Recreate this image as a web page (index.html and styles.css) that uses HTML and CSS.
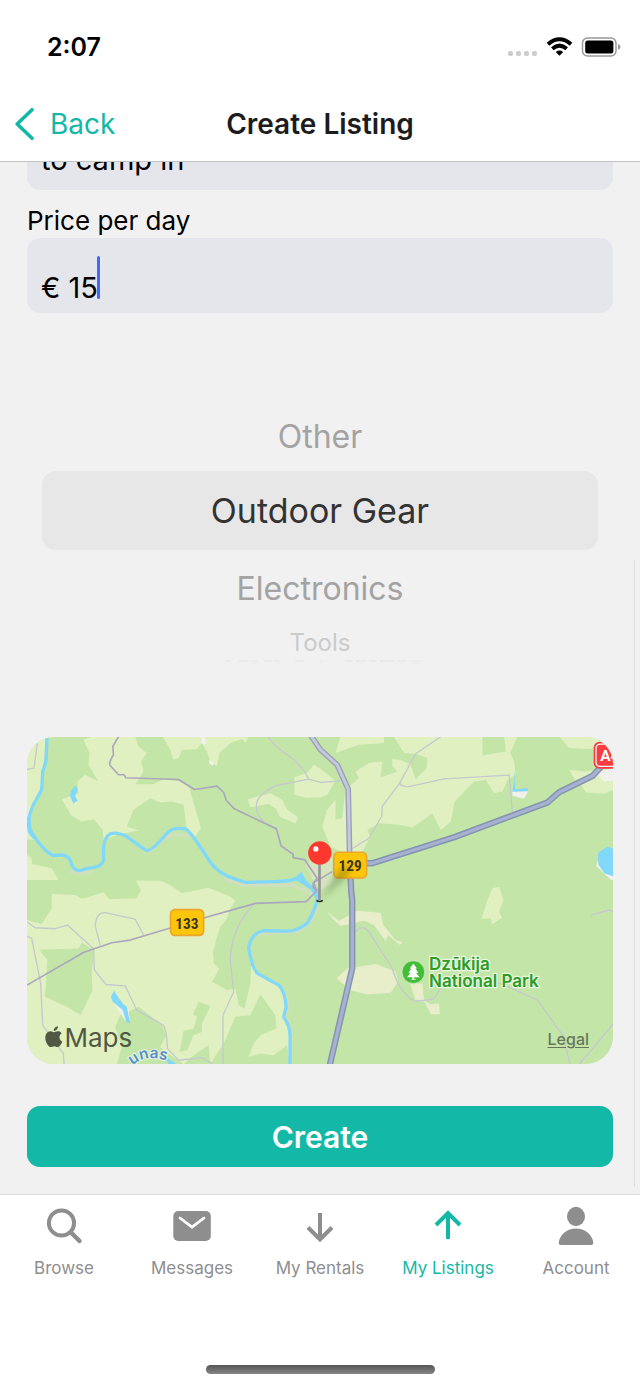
FILE: index.html
```html
<!DOCTYPE html>
<html lang="en">
<head>
<meta charset="utf-8">
<meta name="viewport" content="width=device-width, initial-scale=1">
<title>Create Listing</title>
<link rel="stylesheet" href="styles.css">
</head>
<body>
<div class="screen">
  <div class="status">
    <span class="time">2:07</span>
    <svg class="status-icons" viewBox="0 0 114 22" aria-hidden="true">
      <g fill="#ccc"><rect x="0" y="15" width="5" height="5" rx="2"/><rect x="8" y="15" width="5" height="5" rx="2"/><rect x="16" y="15" width="5" height="5" rx="2"/><rect x="24" y="15" width="5" height="5" rx="2"/></g>
      <g transform="translate(0 1)">
      <g fill="none" stroke="#000" stroke-width="4"><path d="M40 7.200Q51.500-2.600 63 7.200"/><path d="M44.300 11.700Q51.500 5.600 58.700 11.700"/></g>
      <path d="M47.800 14.900Q51.500 12 55.200 14.900L51.500 18.700Z"/>
      <rect x="74.500" y="1" width="33.500" height="18" rx="5" fill="none" stroke="#999" stroke-width="1.500"/>
      <rect x="77.200" y="3.600" width="28.200" height="12.800" rx="2.500"/>
      <path d="M110 7q2.500 1 2.500 3t-2.500 3z" fill="#999"/>
      </g>
    </svg>
  </div>
  <header class="header">
    <button class="back" type="button">
      <svg viewBox="0 0 20 32" aria-hidden="true"><path d="M17 1.800 2.200 16 17 30.200" fill="none" stroke="currentColor" stroke-width="3.600" stroke-linecap="round" stroke-linejoin="round"/></svg>
      Back
    </button>
    <h1 class="title">Create Listing</h1>
  </header>

  <main class="content">
    <form class="form">
      <textarea class="field description" aria-label="Description" rows="1">to camp in</textarea>
      <label class="label" for="price">Price per day</label>
      <div class="price">
        <input class="field price-input" id="price" type="text" value="€ 15">
        <span class="caret"></span>
      </div>
      <fieldset class="picker" aria-label="Category">
        <label class="option near above"><input type="radio" name="category">Other</label>
        <label class="option selected"><input type="radio" name="category" checked>Outdoor Gear</label>
        <label class="option near"><input type="radio" name="category">Electronics</label>
        <label class="option far"><input type="radio" name="category">Tools</label>
        <svg class="edge" viewBox="0 0 200 4" aria-hidden="true"><path d="M6 3h4m8 0h10m4 0h6m6 0h8m2 0h6m15 0h9m16 0h3m22 0h8m3 0h10m3 0h8m3 0h14m4 0h8m6 0h8m6 0h5" stroke="#e4e4e4" stroke-width="1"/></svg>
      </fieldset>

      <div class="map">
        <svg class="map-art" viewBox="21 21 1755 981" preserveAspectRatio="xMidYMid slice" role="img" aria-label="Map of Dzūkija National Park">
          <defs>
            <path id="river-name" d="M337 1006Q385 962 470 1004"/>
            <filter id="soft" x="-50%" y="-50%" width="200%" height="200%"><feGaussianBlur stdDeviation="10"/></filter>
          </defs>
          <rect x="21" y="21" width="1755" height="981" fill="#c3e6a8"/>
          <g fill="#e1f0c0">
            <path d="M21 21H77L70 110 60 180 35 250 28 300 48 330 21 328Z"/>
            <path d="M190 30 215 21H345L355 50 380 70 362 95 370 120 360 145 345 163H400L430 148 480 155 507 172 520 220 542 295 525 320 498 290 490 225 455 215 420 218 390 205 340 240 320 290 355 302 300 312 250 330 248 300 222 268 185 275 155 258 125 208 175 190 172 155 195 135 235 155 205 105 208 70Z"/>
            <path d="M428 21 450 60 460 90 475 85 485 60 530 58 545 40 560 65 570 95 590 108 597 70 630 40 665 28 675 38 685 21Z"/>
            <path d="M822 142 860 130 880 105 900 118 945 153 920 195 900 203 858 204 822 195Z"/>
            <path d="M682 208 750 190 785 210 800 240 832 262 825 280 780 262 765 235 745 222 690 232Z"/>
            <path d="M21 375 35 385V402L95 415 115 450H21Z"/>
            <path d="M95 492 165 495 185 507 250 487 268 508 350 505 362 480 347 452 420 452 445 462 485 490 565 473 630 500 645 512 625 545 620 565 600 590 590 620 578 665 580 700 597 715 575 755 620 780 645 775 655 825 672 835 690 760 693 690 715 730 780 770 795 820 790 860 808 900V1002H21V570L65 582 95 535Z"/>
            <g transform="translate(900)">
              <path d="M60 21 45 70 115 45 190 40V21Z"/>
              <path d="M220 21 250 70 285 72 320 85 318 115 285 148 270 105 240 90 215 88V110L230 125 180 143 185 95 145 100 105 125 115 145 75 180 65 265 45 270V210L20 240 5 290 30 350 60 365 95 370 125 365 150 320 140 300 175 280 235 285 275 293 335 250 360 300 390 275 402 215 460 155 495 150 520 190 545 185 560 150 585 135 580 95 568 70 590 21Z"/>
              <path d="M715 21 745 55 800 58 878 50 840 21ZM745 120 790 125 878 115V180L850 192 795 188 780 165 785 150 762 150Z"/>
              <path d="M500 510 515 475 535 470 548 510 535 545 543 563 515 583 510 565 482 567Z"/>
              <path d="M20 545 55 572 110 542 180 548 188 585 225 630 245 637 237 645 203 615 195 633 160 585 130 572 60 588 40 570ZM48 745 80 715 165 702 225 725 232 755 210 788 140 793 90 780ZM268 760H305L310 810 330 822 355 820 357 852H330L312 815 285 810Z" fill="#e8eeca"/>
            </g>
          </g>
          <g fill="#c3e6a8">
            <path d="M1385 21H1450L1455 65 1385 77Z"/>
            <g transform="translate(0 510)">
              <path d="M57 148 175 145 185 128 222 150 215 220 217 270 182 345 140 320 75 290 82 180ZM290 492 305 440 285 380 300 345 325 335 355 320 425 372 437 408 420 440 445 460 490 492Z"/>
              <path d="M535 305 570 318 545 370V395L520 405 500 450 478 455 490 392 520 385 530 350 518 342ZM720 282 765 345 768 385 720 405 700 430 685 470 720 460 760 465 800 435 807 492H490L520 465 565 435 570 490 610 430 645 350 690 345ZM21 445 40 470 75 490H21Z"/>
            </g>
          </g>
          <path d="M855 405 905 350 935 365V460L900 480 878 450Z" fill="#d6e5bd"/>
          <g fill="#f0f0ec"><path d="M543 21H552L557 40 550 46 543 38ZM565 90 582 100 578 108 568 103ZM275 807 300 813 325 835 328 870 315 872 295 840ZM1474 182 1522 184 1510 207 1475 198ZM1728 132 1778 112V152L1750 155ZM1728 395 1778 435V450H1770L1726 408Z"/></g>
          <g fill="#82d8f8">
            <path d="M152 185 165 168 173 178 165 200 173 212 160 221 150 200ZM272 800 282 782 292 798 310 822 320 830 330 880 318 875 308 840 278 815Z"/>
            <path d="M1730 370 1760 350 1780 358V440L1750 430 1733 405ZM1483 105V178L1520 175 1522 184 1474 186 1480 160ZM820 448 842 425 860 455 892 480 890 515 872 480 845 462ZM435 985 445 985 470 1002H445Z"/>
          </g>
          <g fill="none" stroke-linejoin="round">
            <g stroke="#d0dfbd" stroke-width="10"><path d="M385 368Q440 310 475 315T520 320M610 445Q660 468 700 465H815L880 495M700 620Q720 605 830 605Q870 590 895 530M790 780 803 820 797 860 811 900V1002M150 425 180 430 218 425"/></g>
            <path d="M81 21 78 95 68 125 65 180 40 225Q20 270 30 300 70 365 100 377 140 370 150 390 160 425 180 422 200 415 215 413 245 410 251 390 245 325 270 312 290 305 320 320L375 360Q390 370 440 310 460 290 497 298 515 310 565 390 590 425 625 440 650 450 675 457L760 455Q810 455 835 443M892 475Q895 525 860 580 825 605 800 603L730 602Q690 610 685 655 695 715 713 731L775 765Q793 780 797 830L790 860Q810 890 809 920V1002" stroke="#82d8f8" stroke-width="10"/>
            <path d="M23 260 30 305 45 325" stroke="#82d8f8" stroke-width="13"/>
            <g stroke="#c5c9cd" stroke-width="4">
              <path d="M52 40 42 115 21 119M745 21Q755 45 800 75T865 148L768 167Q710 195 708 225T732 278M865 148 900 158 960 153M1260 21 1185 72 1137 160 1085 230 1083 260 1045 325 985 362M1137 160Q1145 175 1175 168L1270 147 1465 136 1475 250"/>
              <path d="M21 575 45 593 105 596 142 585 220 655 223 720 258 763 315 767 350 840 430 885 438 910 442 955 475 990 545 982 575 1000M240 645 225 585Q230 545 255 548L345 567 370 615M21 618 35 625 62 760 68 885 130 970 132 1002M700 522Q630 600 630 690L640 785 608 855V1002"/>
              <path d="M1005 605Q1025 580 1045 605L1115 715Q1135 785 1180 812 1220 812 1240 805L1270 760H1440L1550 810 1625 915 1648 1002M1675 1002 1778 880M1710 555 1765 540 1778 545"/>
            </g>
            <path d="M295 21 278 50 280 75Q265 100 270 107L295 135H312L317 144 475 149 523 179 590 169 610 188 618 212 642 237 768 297 782 348 818 373V383L853 390 890 445 878 460V472L888 483 857 515 705 520 550 564 330 630 275 638 190 667 21 765M888 483 880 458 935 425" stroke="#aaa7bd" stroke-width="5"/>
            <path d="M870 16 900 60 950 105 983 178 987 370" stroke="#9a9fb7" stroke-width="17"/>
            <path d="M870 16 900 60 950 105 983 178 987 370" stroke="#c5c9dc" stroke-width="9"/>
            <path d="M987 370 992 485 995 510V715L927 1008" stroke="#8593b3" stroke-width="19"/>
            <path d="M987 370 992 485 995 510V715L927 1008" stroke="#a7b2d1" stroke-width="10"/>
            <path d="M1020 400H1055L1300 322 1580 218 1615 187 1715 138 1750 100" stroke="#8593b3" stroke-width="19"/>
            <path d="M1020 400H1055L1300 322 1580 218 1615 187 1715 138 1750 100" stroke="#a7b2d1" stroke-width="10"/>
          </g>
          <g class="shield" text-anchor="middle">
            <rect x="940" y="367" width="98" height="77" rx="13" fill="#fec60b" stroke="#eaa52f" stroke-width="5"/><text x="989" y="424">129</text>
            <rect x="451" y="539" width="99" height="77" rx="13" fill="#fec60b" stroke="#eaa52f" stroke-width="5"/><text x="500" y="596">133</text>
          </g>
          <rect x="1718" y="36" width="100" height="81" rx="18" fill="#fb3c40"/>
          <rect x="1725" y="43" width="90" height="67" rx="13" fill="none" stroke="#fff" stroke-width="4"/>
          <text class="motorway" x="1738" y="93">A4</text>
          <path d="M897 512 960 415 995 405 980 440Z" fill="#243b12" opacity=".28" filter="url(#soft)"/>
          <path d="M897 395V510" stroke="#969696" stroke-width="8"/>
          <path d="M888 511Q897 518 907 511" fill="none" stroke="#222" stroke-width="5"/>
          <circle cx="898" cy="369" r="35" fill="#ff382f"/><circle cx="886" cy="357" r="8" fill="#fff"/>
          <g transform="translate(1178 726)">
            <circle r="34" fill="#43bd37" stroke="#e2f2d3" stroke-width="2"/>
            <path d="M0-26-11-11H-6L-15 2H-8L-19 15H-3V21H-8V23H8V21H3V15H19L8 2H15L6-11H11Z" fill="#fff"/>
          </g>
          <g class="park"><text x="1225" y="719">Dzūkija</text><text x="1225" y="771">National Park</text></g>
          <text class="river"><textPath href="#river-name">unas</textPath></text>
          <g fill="#505844"><path transform="translate(70 888) scale(2.600)" d="M12.152 6.896c-.948 0-2.415-1.078-3.960-1.040-2.040.027-3.910 1.183-4.961 3.014-2.117 3.675-.546 9.103 1.519 12.090 1.013 1.454 2.208 3.090 3.792 3.039 1.520-.065 2.090-.987 3.935-.987 1.831 0 2.350.987 3.960.948 1.637-.026 2.676-1.480 3.676-2.948 1.156-1.688 1.636-3.325 1.662-3.415-.039-.013-3.182-1.221-3.220-4.857-.026-3.040 2.480-4.494 2.597-4.559-1.429-2.090-3.623-2.324-4.390-2.376-2-.156-3.675 1.090-4.610 1.090zM15.530 3.830c.843-1.012 1.400-2.427 1.245-3.830-1.207.052-2.662.805-3.532 1.818-.780.896-1.454 2.338-1.273 3.714 1.338.104 2.715-.688 3.559-1.701"/><text class="maps" x="133" y="949">Maps</text></g>
        </svg>
        <a class="legal" href="#legal">Legal</a>
      </div>
      <button class="create" type="submit">Create</button>
    </form>
    <span class="scroll-thumb"></span>
  </main>

  <nav class="tabs">
    <a class="tab" href="#browse"><svg viewBox="0 0 40 40" aria-hidden="true"><circle cx="17.500" cy="17" r="12.600" fill="none" stroke="currentColor" stroke-width="4"/><path d="m27 26.500 8.500 8.500" stroke="currentColor" stroke-width="4.500" stroke-linecap="round"/></svg>Browse</a>
    <a class="tab" href="#messages"><svg viewBox="0 0 40 40" aria-hidden="true"><rect x="1.300" y="5" width="37.500" height="30" rx="5" fill="currentColor"/><path d="M8 12l12 9.200L32 12" fill="none" stroke="#fff" stroke-width="2.800" stroke-linecap="round" stroke-linejoin="round"/></svg>Messages</a>
    <a class="tab" href="#rentals"><svg viewBox="0 0 40 40" aria-hidden="true"><path d="M20 7v26M8 21.500l12 12 12-12" fill="none" stroke="currentColor" stroke-width="4"/></svg>My Rentals</a>
    <a class="tab active" href="#listings" aria-current="page"><svg viewBox="0 0 40 40" aria-hidden="true"><path d="M20 33V7M8 19l12-12 12 12" fill="none" stroke="currentColor" stroke-width="4"/></svg>My Listings</a>
    <a class="tab" href="#account"><svg viewBox="0 0 40 40" aria-hidden="true"><ellipse cx="20" cy="10.500" rx="9" ry="9.700" fill="currentColor"/><path d="M5 39Q2.700 39 2.700 37C3.500 28 11.500 22.500 20 22.500S36.500 28 37.300 37Q37.300 39 35 39Z" fill="currentColor"/></svg>Account</a>
  </nav>
  <div class="home"><span class="home-bar"></span></div>
</div>
</body>
</html>
```
FILE: styles.css
```css
* { box-sizing: border-box; }
body {
  margin: 0;
  background: #fff;
  color: #000;
  font-family: Inter, "Liberation Sans", sans-serif;
}
button, input, textarea { font: inherit; color: inherit; }
.screen { display: flex; flex-direction: column; height: 100vh; }

.status {
  display: flex;
  justify-content: space-between;
  align-items: center;
  height: 94px;
  padding: 0 18px 0 47px;
}
.time { font-size: 25px; font-weight: 600; }
.status-icons { width: 114px; height: 22px; }

.header {
  display: grid;
  grid-template-columns: 1fr auto 1fr;
  align-items: center;
  height: 68px;
  padding: 0 15px 8px;
  border-bottom: 1px solid #c4c4c6;
}
.back {
  display: flex;
  align-items: center;
  gap: 15px;
  padding: 0;
  border: 0;
  background: none;
  color: #14b8a6;
  font-size: 28px;
}
.back svg { width: 20px; height: 32px; }
.title { margin: 0; color: #1c1c1e; font-size: 28px; font-weight: 600; }

.content {
  position: relative;
  display: flex;
  flex: 1;
  flex-direction: column-reverse;
  min-height: 0;
  overflow: hidden;
  background: #f1f1f1;
}
.form { display: flex; flex-direction: column; padding: 0 27px 27px; }
.field {
  display: block;
  width: 100%;
  border: 0;
  border-radius: 13px;
  outline: 0;
  background: #e5e6eb;
  font-size: 29px;
}
.description {
  flex: none;
  height: 76px;
  padding: 28px 14px 12px;
  line-height: 36px;
  resize: none;
  overflow: hidden;
}
.label { margin-top: 14px; font-size: 26px; line-height: 34px; }
.price { position: relative; }
.price-input { height: 75px; padding: 24px 14px 0; }
.caret {
  position: absolute;
  left: 70px;
  top: 18px;
  width: 3px;
  height: 43px;
  border-radius: 2px;
  background: #4169f5;
}

.picker {
  display: flex;
  flex-direction: column;
  height: 370px;
  margin: 13px 15px 41px;
  padding: 75px 0 0;
  border: 0;
}
.option {
  display: flex;
  flex: none;
  align-items: center;
  justify-content: center;
  height: 76px;
}
.option input { position: absolute; opacity: 0; pointer-events: none; }
.near { color: #a3a3a3; font-size: 32px; }
.above { height: 70px; }
.selected {
  height: 79px;
  border-radius: 14px;
  background: #e7e7e7;
  color: #333;
  font-size: 34px;
}
.far { height: 32px; color: #cbcbcb; font-size: 24px; }
.edge { align-self: center; width: 200px; height: 4px; }

.map {
  position: relative;
  aspect-ratio: 586 / 327;
  border-radius: 27px;
  overflow: hidden;
}
.map-art { display: block; width: 100%; height: 100%; }
.shield { font: 700 46px "Liberation Sans Narrow", "Roboto Condensed", Roboto, sans-serif; fill: #3b381d; }
.shield text { stroke: none; }
.motorway { font: 700 46px Roboto, sans-serif; fill: #fff; }
.park {
  font: 600 51px Inter, sans-serif;
  fill: #2b9c25;
  stroke: #e9f5df;
  stroke-width: 8px;
  stroke-linejoin: round;
  paint-order: stroke;
}
.river {
  font: 600 46px Inter, sans-serif;
  fill: #568fc6;
  stroke: #eef5e4;
  stroke-width: 6px;
  paint-order: stroke;
}
.maps { font: 400 78px Inter, sans-serif; }
.legal {
  position: absolute;
  right: 24px;
  bottom: 15px;
  color: #68775b;
  font-size: 16px;
  font-weight: 500;
  line-height: 20px;
  text-underline-offset: 2px;
}
.create {
  height: 61px;
  margin-top: 42px;
  border: 0;
  border-radius: 13px;
  background: #14b8a6;
  color: #fff;
  font-size: 30px;
  font-weight: 600;
}
.scroll-thumb {
  position: absolute;
  right: 5px;
  bottom: 7px;
  width: 1px;
  height: 627px;
  background: #dfdfdf;
}

.tabs {
  display: grid;
  grid-template-columns: repeat(5, 1fr);
  height: 110px;
  padding-top: 11px;
  border-top: 1px solid #dedede;
}
.tab {
  display: flex;
  flex-direction: column;
  align-items: center;
  gap: 11px;
  color: #8e8e8f;
  font-size: 17px;
  line-height: 22px;
  text-decoration: none;
}
.tab svg { width: 40px; height: 40px; }
.active { color: #14b8a6; }
.home { display: flex; justify-content: center; height: 84px; padding-top: 61px; }
.home-bar {
  width: 229px;
  height: 9px;
  border-radius: 5px;
  background: linear-gradient(#555, #858585);
}
```
